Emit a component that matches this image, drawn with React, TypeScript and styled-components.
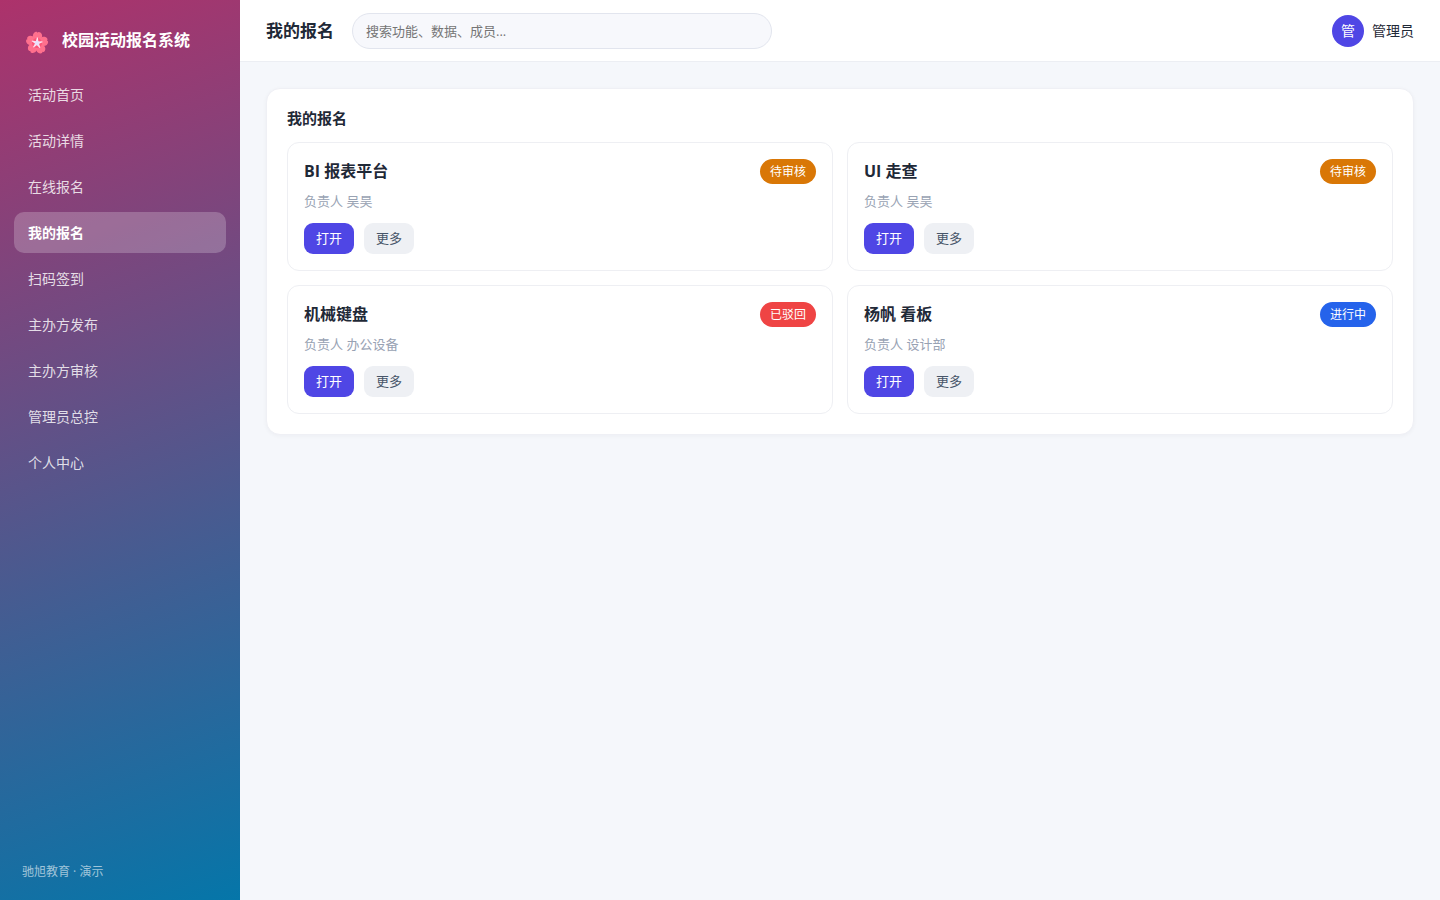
import React from "react";
import styled, { createGlobalStyle } from "styled-components";

const GlobalStyle = createGlobalStyle`
  *, *::before, *::after { box-sizing: border-box; }
  body {
    margin: 0;
    background: #f5f7fb;
    color: #1f2937;
    font-family: "Open Sans", "Noto Sans CJK SC", sans-serif;
    font-size: 14px;
    line-height: 20px;
  }
  button, input { font-family: inherit; }
`;

const Shell = styled.div`
  display: grid;
  grid-template-columns: 240px minmax(0, 1fr);
  min-height: 100vh;
`;

const Sidebar = styled.aside`
  display: flex;
  flex-direction: column;
  padding: 22px 14px 18px;
  color: #fff;
  background: linear-gradient(160deg, #ad326b, #0576a9);
`;

const Brand = styled.div`
  display: flex;
  align-items: center;
  gap: 12px;
  height: 36px;
  margin-bottom: 16px;
  padding-left: 10px;
  font-size: 16px;
  font-weight: 700;
  line-height: 24px;
  svg { flex: none; margin-top: 5px; }
`;

const Nav = styled.nav`
  display: flex;
  flex-direction: column;
  gap: 5px;
`;

const NavLink = styled.a<{ $active?: boolean }>`
  display: block;
  padding: 10px 14px;
  border-radius: 10px;
  line-height: 21px;
  text-decoration: none;
  color: ${(p) => (p.$active ? "#fff" : "rgba(255, 255, 255, 0.82)")};
  font-weight: ${(p) => (p.$active ? 700 : 400)};
  background: ${(p) => (p.$active ? "rgba(255, 255, 255, 0.22)" : "transparent")};
`;

const SidebarFoot = styled.footer`
  margin-top: auto;
  padding-left: 8px;
  font-size: 12px;
  color: rgba(255, 255, 255, 0.6);
`;

const Topbar = styled.header`
  display: flex;
  align-items: center;
  gap: 18px;
  height: 62px;
  padding: 0 26px;
  background: #fff;
  border-bottom: 1px solid #eceef3;
`;

const PageTitle = styled.h1`
  margin: 0;
  font-size: 17px;
  line-height: 24px;
  font-weight: 700;
`;

const Search = styled.input`
  width: 420px;
  height: 36px;
  padding: 0 13px;
  border: 1px solid #e2e5ee;
  border-radius: 18px;
  background: #f7f8fc;
  font-size: 13px;
  color: #1f2937;
  &::placeholder { color: #757575; }
`;

const User = styled.div`
  display: flex;
  align-items: center;
  gap: 8px;
  margin-left: auto;
`;

const Avatar = styled.span`
  display: grid;
  place-items: center;
  width: 32px;
  height: 32px;
  border-radius: 50%;
  background: #4f46e5;
  color: #fff;
`;

const Content = styled.main`
  padding: 26px;
`;

const Panel = styled.section`
  padding: 20px;
  border: 1px solid #eff0f5;
  border-radius: 14px;
  background: #fff;
  box-shadow: 0 1px 4px rgba(15, 23, 42, 0.04);
`;

const PanelTitle = styled.h2`
  margin: 0 0 14px;
  font-size: 15px;
  line-height: 19px;
  font-weight: 700;
`;

const CardGrid = styled.div`
  display: grid;
  grid-template-columns: repeat(2, minmax(0, 1fr));
  gap: 14px;
`;

const Card = styled.article`
  padding: 16px;
  border: 1px solid #eeeff3;
  border-radius: 12px;
  background: #fff;
`;

const CardHead = styled.div`
  display: flex;
  align-items: center;
  justify-content: space-between;
`;

const CardTitle = styled.h3`
  margin: 0;
  font-size: 16px;
  line-height: 25px;
  font-weight: 700;
`;

const Badge = styled.span<{ $color: string }>`
  padding: 0 10px;
  border-radius: 13px;
  font-size: 12px;
  line-height: 25px;
  color: #fff;
  background: ${(p) => p.$color};
`;

const Meta = styled.p`
  margin: 8px 0 12px;
  font-size: 13px;
  line-height: 19px;
  color: #98a2b3;
`;

const Actions = styled.div`
  display: flex;
  gap: 10px;
`;

const Button = styled.button<{ $primary?: boolean }>`
  padding: 6px 12px;
  border: 0;
  border-radius: 9px;
  font-size: 13px;
  line-height: 19px;
  color: ${(p) => (p.$primary ? "#fff" : "#475569")};
  background: ${(p) => (p.$primary ? "#4f46e5" : "#eef0f4")};
`;

const navItems = [
  "活动首页", "活动详情", "在线报名", "我的报名", "扫码签到",
  "主办方发布", "主办方审核", "管理员总控", "个人中心",
];
const current = "我的报名";

const entries = [
  { title: "BI 报表平台", owner: "吴昊", status: "待审核", color: "#d97706" },
  { title: "UI 走查", owner: "吴昊", status: "待审核", color: "#d97706" },
  { title: "机械键盘", owner: "办公设备", status: "已驳回", color: "#ef4444" },
  { title: "杨帆 看板", owner: "设计部", status: "进行中", color: "#2563eb" },
];

const petals = [0, 72, 144, 216, 288];

function Blossom() {
  return (
    <svg width="26" height="24" viewBox="-13 -12 26 24" aria-hidden="true">
      <g transform="rotate(4)">
        {petals.map((a) => (
          <path
            key={a}
            transform={`rotate(${a})`}
            d="M0 0C-3.6-2.4-5.6-6-4.2-9C-3.3-10.8-1.6-11.3-.7-11L0-10.3L.7-11C1.6-11.3 3.3-10.8 4.2-9C5.6-6 3.6-2.4 0 0Z"
            fill="#ff708d"
          />
        ))}
        <circle r="5" fill="#fb5577" />
        {petals.map((a) => (
          <g key={a} transform={`rotate(${a})`}>
            <path d="M-1.6 0L-.5-5.6H.5L1.6 0Z" fill="#fcdff0" />
          </g>
        ))}
        <circle r="2.2" fill="#e9e0fb" />
      </g>
    </svg>
  );
}

export default function App() {
  return (
    <>
      <GlobalStyle />
      <Shell>
        <Sidebar>
          <Brand><Blossom />校园活动报名系统</Brand>
          <Nav>
            {navItems.map((item) => (
              <NavLink
                key={item}
                href="#"
                $active={item === current}
                aria-current={item === current ? "page" : undefined}
              >
                {item}
              </NavLink>
            ))}
          </Nav>
          <SidebarFoot>驰旭教育 · 演示</SidebarFoot>
        </Sidebar>
        <div>
          <Topbar>
            <PageTitle>我的报名</PageTitle>
            <Search type="search" aria-label="搜索" placeholder="搜索功能、数据、成员..." />
            <User><Avatar>管</Avatar>管理员</User>
          </Topbar>
          <Content>
            <Panel>
              <PanelTitle>我的报名</PanelTitle>
              <CardGrid>
                {entries.map((e) => (
                  <Card key={e.title}>
                    <CardHead>
                      <CardTitle>{e.title}</CardTitle>
                      <Badge $color={e.color}>{e.status}</Badge>
                    </CardHead>
                    <Meta>负责人 {e.owner}</Meta>
                    <Actions>
                      <Button type="button" $primary>打开</Button>
                      <Button type="button">更多</Button>
                    </Actions>
                  </Card>
                ))}
              </CardGrid>
            </Panel>
          </Content>
        </div>
      </Shell>
    </>
  );
}
